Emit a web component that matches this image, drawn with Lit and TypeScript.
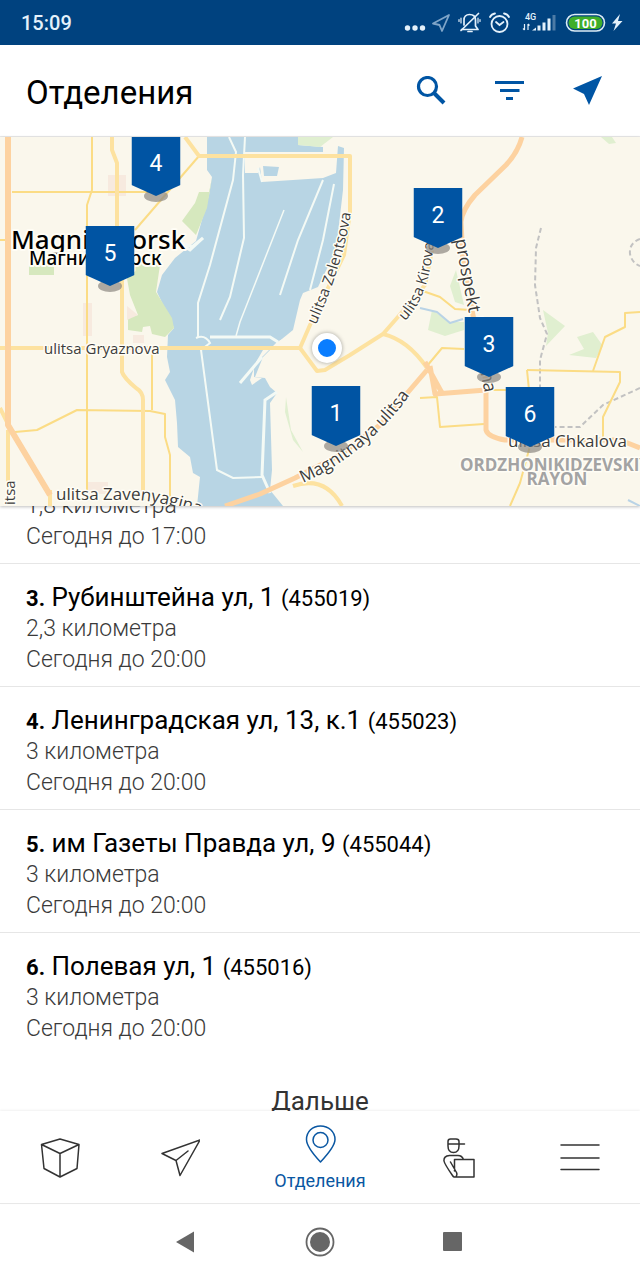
import { LitElement, html, css, svg } from "lit";
import { customElement, state, query } from "lit/decorators.js";

interface Office {
  id: number;
  address?: string;
  index?: string;
  distance: string;
  hours: string;
}

interface Pin {
  id: number;
  x: number;
  y: number;
}

const OFFICES: Office[] = [
  { id: 2, distance: "1,8 километра", hours: "Сегодня до 17:00" },
  { id: 3, address: "Рубинштейна ул, 1", index: "455019", distance: "2,3 километра", hours: "Сегодня до 20:00" },
  { id: 4, address: "Ленинградская ул, 13, к.1", index: "455023", distance: "3 километра", hours: "Сегодня до 20:00" },
  { id: 5, address: "им Газеты Правда ул, 9", index: "455044", distance: "3 километра", hours: "Сегодня до 20:00" },
  { id: 6, address: "Полевая ул, 1", index: "455016", distance: "3 километра", hours: "Сегодня до 20:00" },
];

// x: offset from the middle of the map to the tip, y: offset of the tip from the top of the map
const PINS: Pin[] = [
  { id: 4, x: -164, y: 59 },
  { id: 5, x: -210, y: 149 },
  { id: 2, x: 118, y: 111 },
  { id: 3, x: 169, y: 240 },
  { id: 1, x: 16, y: 309 },
  { id: 6, x: 210, y: 310 },
];

@customElement("status-bar")
class StatusBar extends LitElement {
  static styles = css`
    :host {
      display: flex;
      align-items: center;
      justify-content: space-between;
      height: 45px;
      padding: 0 14px 0 21px;
      background: #00427f;
      color: #e4f1fb;
      font: 500 20px/24px Roboto, sans-serif;
    }
    .net {
      font: 500 9px Roboto, sans-serif;
    }
    .charge {
      font: 700 13px Roboto, sans-serif;
    }
  `;

  render() {
    return html`
      <span>15:09</span>
      <svg width="224" height="45" viewBox="402 0 224 45" fill="none" aria-hidden="true">
        <g fill="#e4f1fb">
          <circle cx="407.500" cy="28" r="2.700" />
          <circle cx="415" cy="28" r="2.700" />
          <circle cx="422.500" cy="28" r="2.700" />
        </g>
        <path d="M449 15 L433 23.500 L439.500 25 L442 31 Z" stroke="#7fa5c8" stroke-width="1.800" stroke-linejoin="round" />
        <g stroke="#e4f1fb" stroke-width="1.700" stroke-linecap="round" stroke-linejoin="round">
          <path d="M461.500 29.500 H478 L475.500 26 V20 C475.500 16 473 14.500 469.500 14.500 C466 14.500 464 17 464 20 V25" />
          <path d="M478.500 13.500 L461 30.500" />
          <path d="M461 18 V23 M459 19.500 V21.500 M478 18 V23 M480 19.500 V21.500" stroke-width="1.200" />
          <path d="M468 31.500 H472" />
        </g>
        <g stroke="#e4f1fb" stroke-width="1.800" stroke-linecap="round">
          <circle cx="499.500" cy="24" r="8" />
          <path d="M496 22 L499.500 25 L503.500 22" />
          <path d="M490 17 Q491.500 14 495 13.500 M504 13.500 Q507.500 14 509 17" />
        </g>
        <text class="net" x="525" y="19.500" fill="#e4f1fb">4G</text>
        <path d="M524.500 24 V30 M523 28.500 L524.500 30 M528 30 V24 M529.500 25.500 L528 24" stroke="#e4f1fb" stroke-width="1.200" />
        <path d="M532 30.500 H536 V27.500 Z M537.500 25.500 H540.500 V30.500 H537.500 Z M542.500 22.500 H545.500 V30.500 H542.500 Z M547.500 18.500 H550.500 V30.500 H547.500 Z" fill="#e4f1fb" />
        <path d="M552.500 15 H555.500 V30.500 H552.500 Z" fill="#4d7ba6" />
        <rect x="566.500" y="14.500" width="38" height="16.500" rx="8.200" stroke="#dcecf6" stroke-width="1.600" />
        <rect x="568.500" y="16.500" width="34" height="12.500" rx="6.200" fill="#3fae2a" />
        <text class="charge" x="585.500" y="27.500" text-anchor="middle" fill="#ffffff">100</text>
        <path d="M620 14 L612 23.500 H616 L613.500 31 L622.500 21 H618 Z" fill="#e4f1fb" />
      </svg>
    `;
  }
}

@customElement("page-header")
class PageHeader extends LitElement {
  static styles = css`
    :host {
      display: flex;
      align-items: center;
      justify-content: space-between;
      height: 91px;
      padding: 0 38px 0 26px;
      border-bottom: 1px solid #ececec;
      background: #fff;
      font-family: Roboto, sans-serif;
    }
    h1 {
      margin: 0;
      padding-top: 4px;
      font-size: 33px;
      font-weight: 400;
      line-height: 40px;
      color: #000;
    }
    .actions {
      display: flex;
      gap: 48px;
    }
    button {
      width: 30px;
      height: 30px;
      padding: 0;
      border: 0;
      background: none;
      color: #0055a4;
      cursor: pointer;
    }
    svg {
      display: block;
    }
  `;

  render() {
    return html`
      <h1>Отделения</h1>
      <div class="actions">
        <button aria-label="Поиск">
          <svg width="30" height="30" viewBox="0 0 30 30" fill="none" stroke="currentColor">
            <circle cx="11.500" cy="10.500" r="9" stroke-width="3.200" />
            <path d="M17.500 16.500 L28 27" stroke-width="4" />
          </svg>
        </button>
        <button aria-label="Фильтр">
          <svg width="30" height="30" viewBox="0 0 30 30" fill="currentColor">
            <path d="M1 5 H30 V8 H1 Z M6 13 H25.500 V16 H6 Z M12 21 H19 V24 H12 Z" />
          </svg>
        </button>
        <button aria-label="Моё местоположение">
          <svg width="30" height="30" viewBox="0 0 30 30" fill="currentColor">
            <path d="M30 0 L17 29 L12 18 L1 12.500 Z" />
          </svg>
        </button>
      </div>
    `;
  }
}

@customElement("office-map")
class OfficeMap extends LitElement {
  static styles = css`
    :host {
      display: block;
      position: relative;
      z-index: 1;
      height: 369px;
      flex: none;
      box-shadow: 0 1px 3px rgba(0, 0, 0, 0.25);
      background: #faf7ec;
    }
    .canvas {
      position: absolute;
      inset: 0;
      overflow: hidden;
    }
    .ground {
      display: block;
      width: 100%;
      height: 100%;
    }
    .thin {
      stroke: #fbdc85;
      stroke-width: 2;
    }
    .mid {
      stroke: #fde2a0;
      stroke-width: 4;
    }
    .main {
      stroke: #fdd2a0;
      stroke-width: 5;
    }
    .dam {
      stroke: #f4faf5;
      stroke-width: 2;
    }
    .green {
      fill: #d6e8be;
    }
    .meadow {
      fill: #e0efd0;
    }
    .water {
      fill: #b8d5e4;
    }
    .land {
      fill: #faf7ec;
    }
    .rail {
      stroke: #c2c2c2;
      stroke-width: 2;
      stroke-dasharray: 5 3;
    }
    .label {
      font-family: "Open Sans", "Noto Sans", sans-serif;
      font-size: 15px;
      fill: #3c3c3c;
      stroke: #fffdf5;
      stroke-width: 3;
      paint-order: stroke;
      stroke-linejoin: round;
    }
    .large {
      font-size: 17px;
    }
    .avenue {
      font-size: 18px;
    }
    .city {
      font-family: "Noto Sans", sans-serif;
      font-size: 26px;
      font-weight: 500;
      fill: #000;
      stroke-width: 4;
    }
    .native {
      font-family: "Noto Sans", sans-serif;
      font-size: 19px;
      font-weight: 500;
      fill: #000;
      stroke-width: 4;
    }
    .district {
      font-size: 17px;
      font-weight: 700;
      fill: #a3a3a3;
    }
    .pin {
      position: absolute;
      width: 49px;
      height: 66px;
      padding: 0;
      border: 0;
      background: none;
      transform: translate(-50%, -60px);
      color: #fff;
      font: 400 23px/56px Roboto, sans-serif;
      cursor: pointer;
      display: grid;
    }
    .pin svg,
    .pin span {
      grid-area: 1 / 1;
    }
    .me {
      position: absolute;
      left: calc(50% + 7px);
      top: 211px;
      width: 18px;
      height: 18px;
      border: 6px solid #fff;
      border-radius: 50%;
      background: #0a7dff;
      box-shadow: 0 0 4px rgba(0, 0, 0, 0.35);
      transform: translate(-50%, -50%);
    }
  `;

  private ground() {
    return svg`
      <g class="water">
        <path d="M207 137 H298 V145 L323 147 V152 H207 Z" />
        <path d="M207 150 H245 V173 L258 173 L260 167 L262 182 L293 180 L323 178 L336 173 L338 146 L344 148 L343 190 L338 233 L336 250 L318 287 L303 293 L300 300 L293 330 L277 343 L263 357 L255 377 L265 378 L270 387 L277 393 L270 403 L272 470 L270 490 L283 506 H197 L200 477 L193 473 L190 457 L178 447 L177 423 L175 400 L165 380 L170 372 L167 357 L168 335 L174 328 L168 315 L157 292 L162 275 L175 258 L196 241 L209 195 L212 177 L207 170 Z" />
        <path d="M263 166 L279 167 L277 176 H264 Z" />
      </g>
      <path class="land" d="M263 350 H300 V330 L277 342 L263 356 L254 366 L254 377 L262 378 L252 385 L250 380 L256 362 Z" />
      <g class="green">
        <path d="M212 178 L209 192 L199 192 L195 203 L182 221 L196 235 L207 208 Z" />
        <path d="M124 262 L160 265 L156 292 L172 318 L174 328 L165 337 L152 334 L150 326 L143 327 L142 332 L128 330 V318 L138 315 L130 295 Z" />
        <path d="M29 265 H54 V275 H29 Z" />
      </g>
      <g class="meadow">
        <path d="M298 137 H333 L320 147 L298 145 Z" />
        <path d="M286 397 L291 430 L303 452 L293 440 L285 412 Z" />
        <path d="M456 270 L450 286 L455 302 L464 305 Z" />
        <path d="M432 310 L450 322 L464 322 V330 L445 336 L428 330 Z" />
        <path d="M543 310 L565 326 L546 346 L548 333 Z" />
        <path d="M577 337 L593 332 L603 346 L596 358 L569 355 L584 349 Z" />
        <path d="M601 137 H612 L616 143 L609 144 Z" />
      </g>
      <g fill="#f7eadf">
        <path d="M108 175 H126 V196 H108 Z" />
        <path d="M83 303 H92 V336 H83 Z" />
        <path d="M127 306 L138 315 L127 320 Z" />
        <path d="M133 335 H144 V343 H133 Z" />
        <path d="M86 482 H108 V494 H86 Z" />
      </g>
      <g class="dam" fill="none">
        <path d="M229 137 L236 152 L233 180 L210 265 L198 303 V337" />
        <path d="M245 137 L243 175 L244 238 L230 297 L220 320" />
        <path d="M284 210 L240 322 L236 336" stroke-width="1.500" />
        <path d="M323 180 L298 240 L280 295" />
        <path d="M334 184 L323 240 L310 290" />
        <path d="M262 182 L258 168" />
        <path d="M196 338 Q205 334 210 343 L201 350 L217 470 L233 478 L262 477" />
        <path d="M210 337 H270 L278 342" stroke-width="3" />
        <path d="M240 383 L262 357" stroke-width="3" />
        <path d="M277 392 L265 400 L262 475 L270 493" stroke-width="3" />
        <path d="M182 243 L192 247 L203 238 L190 250 L180 244" stroke-width="3" />
      </g>
      <g fill="none" stroke-linejoin="round">
        <g class="rail">
          <path d="M541 228 L536 248 L535 285 L540 318 L547 334 L540 360 V387" />
          <path d="M640 388 L603 405 L580 427 H555" />
          <path d="M640 239 Q629 243 630 254 Q632 263 640 266" />
        </g>
        <path d="M420 308 L437 312 L450 323 L463 319" stroke="#b9d3e6" stroke-width="2" />
        <path d="M628 500 L640 506" stroke="#b9d3e6" stroke-width="2" />
        <g class="thin">
          <path d="M12 192 H150" />
          <path d="M92 137 V190 L87 205 V490" />
          <path d="M199 156 L135 230" />
          <path d="M152 350 V410" />
          <path d="M15 432 L37 430 L77 410 L150 411 L165 414 V437 L170 455 V497" />
          <path d="M0 240 H6" />
          <path d="M427 366 L442 348 L464 349" />
          <path d="M420 398 L437 397 L440 427 L484 424" />
          <path d="M527 370 L620 372 L620 382 L603 417 V440" />
          <path d="M529 390 L527 370 M593 371 L605 337 L625 327 V313 L640 312" />
          <path d="M486 390 H508" />
          <path d="M530 446 L520 483 L510 506" />
          <path d="M420 290 L440 297 L455 309 L470 310" />
        </g>
        <g class="mid">
          <path d="M112 137 V150 L117 163 V235" />
          <path d="M122 280 V372 Q124 378 136 388 Q143 392 143 400 V500" />
          <path d="M185 137 L199 156 H350 V212 L344 255 L310 325 L300 348" />
          <path d="M0 348 H300 L317 371 L325 370 L350 355 L383 334 L397 318 L425 285 L432 250" />
          <path d="M383 334 Q408 340 427 368" />
          <path d="M8 430 V490 M0 408 L12 432" />
          <path d="M293 486 Q325 475 342 506" />
          <path d="M50 490 V506" />
        </g>
        <g class="main">
          <path d="M8 137 V425 L50 495" stroke-width="6" />
          <path d="M522 137 Q518 152 506 165 L475 195 Q462 210 461 222 L463 260 L472 310 L488 392" />
          <path d="M225 506 L260 494 L295 478 L340 455 L380 425 L427 370" />
          <path d="M425 362 L442 393 M430 366 L435 394 L486 390 V430 Q488 437 505 440 H620 L640 448" />
        </g>
      </g>
    `;
  }

  private labels() {
    return svg`
      <defs>
        <path id="zavenyagina" d="M56 500 H134 Q160 501 200 514" />
        <path id="magnitnaya" d="M303 483 Q368 454 412 392" />
        <path id="kirova" d="M405 321 Q430 296 434 240" />
        <path id="prospekt" d="M455 240 Q464 290 486 400" />
        <path id="zelentsova" d="M316 325 Q345 260 352 205" />
      </defs>
      <text class="label city" x="11" y="249">Magnitogorsk</text>
      <text class="label native" x="29" y="265">Магнитогорск</text>
      <text class="label" x="44" y="354">ulitsa Gryaznova</text>
      <text class="label large"><textPath href="#zavenyagina">ulitsa Zavenyagina</textPath></text>
      <text class="label large"><textPath href="#magnitnaya">Magnitnaya ulitsa</textPath></text>
      <text class="label"><textPath href="#kirova">ulitsa Kirova</textPath></text>
      <text class="label avenue"><textPath href="#prospekt">prospekt Pushkina</textPath></text>
      <text class="label"><textPath href="#zelentsova">ulitsa Zelentsova</textPath></text>
      <text class="label large" x="508" y="447">ulitsa Chkalova</text>
      <text class="label" transform="translate(15 505) rotate(-90)">itsa</text>
      <text class="label district" x="460" y="471">ORDZHONIKIDZEVSKIY</text>
      <text class="label district" x="557" y="485" text-anchor="middle">RAYON</text>
    `;
  }

  render() {
    return html`
      <div class="canvas">
        <svg class="ground" viewBox="0 137 640 369" preserveAspectRatio="xMidYMid slice" aria-hidden="true">
          ${this.ground()} ${this.labels()}
        </svg>
        ${PINS.map(
          (pin) => html`
            <button class="pin" aria-label="Отделение ${pin.id}" style="left: calc(50% + ${pin.x}px); top: ${pin.y}px">
              <svg width="49" height="66" viewBox="0 0 49 66" aria-hidden="true">
                <ellipse cx="24.500" cy="60" rx="12" ry="6" fill="#8c8882" fill-opacity="0.700" />
                <path d="M0 0 H49 V49 L24.500 60 L0 49 Z" fill="#0054a3" />
              </svg>
              <span>${pin.id}</span>
            </button>
          `
        )}
        <div class="me"></div>
      </div>
    `;
  }
}

@customElement("office-list")
class OfficeList extends LitElement {
  static styles = css`
    :host {
      display: block;
      flex: 1;
      min-height: 0;
      font-family: Roboto, sans-serif;
    }
    .scroll {
      height: 100%;
      overflow-y: auto;
      scrollbar-width: none;
    }
    ul {
      margin: 0;
      padding: 0;
      list-style: none;
    }
    li {
      padding: 17px 26px 11px;
      border-top: 1px solid #e6e6e6;
    }
    li:first-child {
      padding-top: 0;
      border-top: 0;
    }
    h2 {
      margin: 0;
      font-size: 26px;
      font-weight: 400;
      line-height: 32px;
      color: #000;
    }
    .number {
      font-size: 22px;
      font-weight: 700;
      line-height: 1;
    }
    .index {
      font-size: 22px;
      line-height: 1;
    }
    p {
      margin: 0;
      font-size: 23px;
      font-weight: 300;
      line-height: 31px;
      color: #3a3a3a;
    }
    .more {
      display: block;
      width: 100%;
      padding: 30px 0 24px;
      border: 0;
      background: none;
      font: 400 26px/32px Roboto, sans-serif;
      color: #333;
      cursor: pointer;
    }
  `;

  @query(".scroll") private scroller!: HTMLElement;

  firstUpdated() {
    // The bars around the list take their height first, then the list can scroll.
    requestAnimationFrame(() => {
      this.scroller.scrollTop = 16;
    });
  }

  render() {
    return html`
      <div class="scroll">
        <ul>
          ${OFFICES.map(
            (o) => html`
              <li>
                ${o.address
                  ? html`<h2><span class="number">${o.id}.</span> ${o.address} <span class="index">(${o.index})</span></h2>`
                  : null}
                <p>${o.distance}</p>
                <p>${o.hours}</p>
              </li>
            `
          )}
        </ul>
        <button class="more">Дальше</button>
      </div>
    `;
  }
}

@customElement("tab-bar")
class TabBar extends LitElement {
  static styles = css`
    :host {
      display: block;
      position: relative;
      box-shadow: 0 -1px 2px rgba(0, 0, 0, 0.06);
      border-bottom: 1px solid #e8e8e8;
      background: #fff;
    }
    nav {
      display: grid;
      grid-template-columns: 3fr 3fr 4fr 3fr 3fr;
      height: 92px;
    }
    button {
      display: flex;
      flex-direction: column;
      align-items: center;
      justify-content: center;
      gap: 6px;
      padding: 2px 0 0;
      border: 0;
      background: none;
      color: #333;
      font: 400 18px/24px Roboto, sans-serif;
      cursor: pointer;
    }
    .active {
      padding-top: 4px;
      color: #0a57a2;
    }
    svg {
      display: block;
      fill: none;
      stroke: currentColor;
      stroke-width: 1.5;
      stroke-linejoin: round;
      stroke-linecap: round;
    }
  `;

  @state() private active = 2;

  private tabs = [
    {
      name: "Посылки",
      icon: html`<svg width="40" height="40" viewBox="0 0 40 40">
        <path d="M20 1 L39 6.500 L37 30.500 L20 39 L4 30.500 L1.500 6.500 Z M1.500 6.500 L20 15.500 L39 6.500 M20 15.500 V39" />
      </svg>`,
    },
    {
      name: "Отправить",
      icon: html`<svg width="40" height="40" viewBox="0 0 40 40">
        <path d="M40 2 L2 15.500 L16 22.500 L20 37.500 Z M16 22.500 L28 13" />
      </svg>`,
    },
    {
      name: "Отделения",
      icon: html`<svg width="40" height="38" viewBox="0 0 40 38">
        <path d="M20.500 37 C13 29 6.500 21 6.500 14.500 C6.500 6.500 12.500 1 20.500 1 C28.500 1 35 6.500 35 14.500 C35 21 28 29 20.500 37 Z" />
        <circle cx="20.500" cy="15" r="7.500" />
      </svg>`,
    },
    {
      name: "Курьер",
      icon: html`<svg width="40" height="40" viewBox="0 0 40 40">
        <path d="M8 6 V3.500 Q8 1 10.500 1 H16 Q19 1 19 3.500 V8 Q19 14.500 13.500 14.500 Q8 14.500 8 8 Z M8 6 H24.500" />
        <path d="M14.500 21.500 H34 V39 H15 M14.500 21.500 V33 M23.500 21.500 Q22 17.500 18 17.500 H9.500 Q3.500 18 4 23 Q4.500 26 12.500 37.500 Q14 40 16 38.500 Q17.500 37 16.500 34.500 L10.500 24" />
      </svg>`,
    },
    {
      name: "Меню",
      icon: html`<svg width="40" height="40" viewBox="0 0 40 40">
        <path d="M1 7 H39 M1 20 H39 M1 31.500 H39" />
      </svg>`,
    },
  ];

  render() {
    return html`
      <nav>
        ${this.tabs.map(
          (tab, i) => html`
            <button
              class=${i === this.active ? "active" : ""}
              aria-label=${tab.name}
              @click=${() => (this.active = i)}
            >
              ${tab.icon} ${i === this.active ? html`<span>${tab.name}</span>` : null}
            </button>
          `
        )}
      </nav>
    `;
  }
}

@customElement("system-bar")
class SystemBar extends LitElement {
  static styles = css`
    :host {
      display: flex;
      align-items: center;
      justify-content: center;
      gap: 104px;
      height: 76px;
      background: #fff;
    }
    button {
      padding: 0;
      border: 0;
      background: none;
      color: #666;
      cursor: pointer;
    }
    svg {
      display: block;
    }
  `;

  render() {
    return html`
      <button aria-label="Назад">
        <svg width="30" height="30" viewBox="0 0 30 30"><path d="M5 15 L23 4.500 V25.500 Z" fill="currentColor" /></svg>
      </button>
      <button aria-label="Домой">
        <svg width="30" height="30" viewBox="0 0 30 30">
          <circle cx="15" cy="15" r="13.500" fill="none" stroke="currentColor" stroke-width="1.800" />
          <circle cx="15" cy="15" r="10" fill="currentColor" />
        </svg>
      </button>
      <button aria-label="Недавние">
        <svg width="30" height="30" viewBox="0 0 30 30"><rect x="4" y="5" width="19" height="19" rx="1" fill="currentColor" /></svg>
      </button>
    `;
  }
}

@customElement("app-root")
class AppRoot extends LitElement {
  static styles = css`
    :host {
      display: flex;
      flex-direction: column;
      height: 100vh;
      background: #fff;
    }
  `;

  render() {
    return html`
      <status-bar></status-bar>
      <page-header></page-header>
      <office-map></office-map>
      <office-list></office-list>
      <tab-bar></tab-bar>
      <system-bar></system-bar>
    `;
  }
}
